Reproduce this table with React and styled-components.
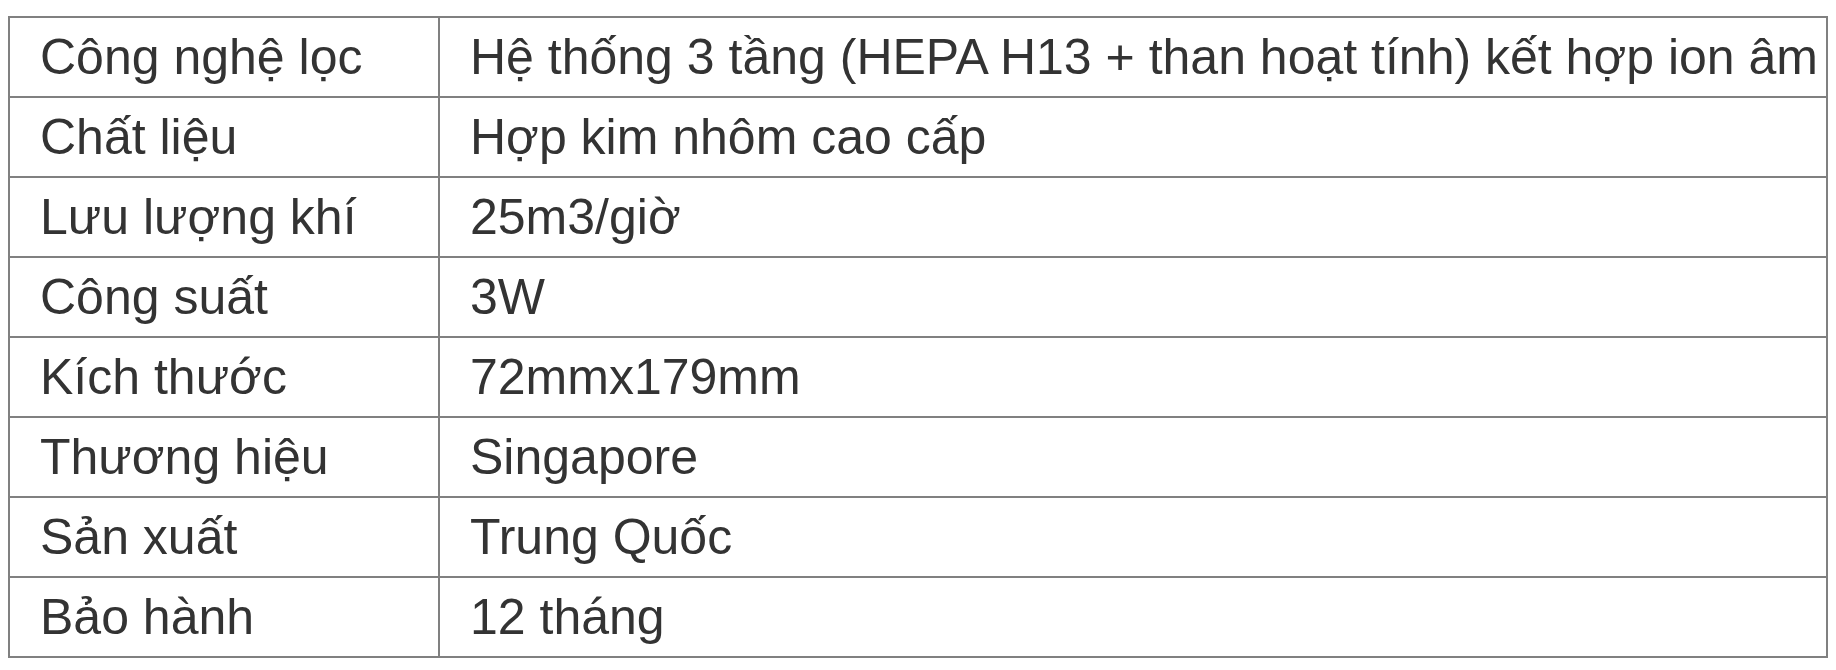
import React from "react";
import styled, { createGlobalStyle } from "styled-components";

const GlobalStyle = createGlobalStyle`
  body {
    margin: 0;
    background: #ffffff;
  }
`;

// thông số sản phẩm
const specs = [
    ["Công nghệ lọc", "Hệ thống 3 tầng (HEPA H13 + than hoạt tính) kết hợp ion âm"],
    ["Chất liệu", "Hợp kim nhôm cao cấp"],
    ["Lưu lượng khí", "25m3/giờ"],
    ["Công suất", "3W"],
    ["Kích thước", "72mmx179mm"],
    ["Thương hiệu", "Singapore"],
    ["Sản xuất", "Trung Quốc"],
    ["Bảo hành", "12 tháng"],
];

const Page = styled.div`
  padding: 16px 8px;
`;

const SpecTable = styled.table`
  border-collapse: collapse;
  width: 100%;
  font-family: "Liberation Sans", Arial, sans-serif;
  font-size: 50px;
  color: #333333;
`;

const Cell = styled.td`
  border: 2px solid #808080;
  height: 78px;
  padding: 0 8px 0 30px;
  vertical-align: middle;
  white-space: nowrap;
  width: ${(props) => (props.$label ? "390px" : "auto")};
`;

export default function App() {
    return (
        <Page>
            <GlobalStyle />
            <SpecTable>
                <tbody>
                {specs.map(([label, value]) => (
                    <tr key={label}>
                        <Cell $label>{label}</Cell>
                        <Cell>{value}</Cell>
                    </tr>
                ))}
                </tbody>
            </SpecTable>
        </Page>
    );
}
